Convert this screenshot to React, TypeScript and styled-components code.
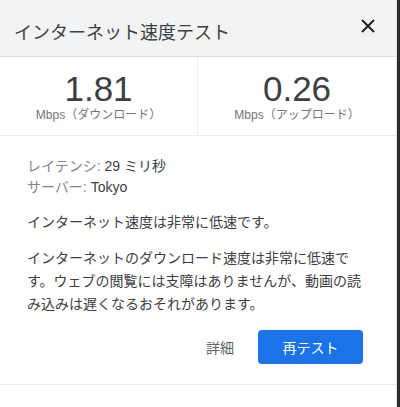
import React from 'react'
import styled, { createGlobalStyle } from 'styled-components'

const GlobalStyle = createGlobalStyle`
  html, body {
    margin: 0;
    padding: 0;
    background: #2b2b2b;
  }
  body {
    font-family: "Liberation Sans", "Noto Sans CJK JP", sans-serif;
  }
`

const Panel = styled.div`
  width: 396px;
  min-height: 407px;
  background: #fff;
  border-right: 1px solid #e3e3e3;
  color: #3c4043;
`

const Header = styled.div`
  height: 56px;
  display: flex;
  align-items: center;
  justify-content: space-between;
  padding: 0 16px 0 14px;
  background: #f1f3f4;
  border-bottom: 1px solid #dadce0;
`

const Title = styled.h1`
  margin: 0;
  font-size: 18px;
  font-weight: 400;
  color: #3c4043;
  padding-top: 6px;
`

const CloseButton = styled.button`
  width: 24px;
  height: 24px;
  display: flex;
  align-items: center;
  justify-content: center;
  border: 0;
  padding: 0;
  background: transparent;
  color: #202124;
  margin-top: -4px;
`

const Stats = styled.div`
  display: grid;
  grid-template-columns: 1fr 1fr;
  border-bottom: 1px solid #ececec;
`

const Stat = styled.div<{ $divider?: boolean }>`
  height: 78px;
  display: flex;
  flex-direction: column;
  align-items: center;
  padding-top: 14px;
  box-sizing: border-box;
  border-right: ${({ $divider }) => ($divider ? '1px solid #f0f0f0' : 'none')};
`

const Value = styled.div`
  font-size: 35px;
  line-height: 36px;
  color: #3c4043;
`

const Unit = styled.div`
  font-size: 12px;
  line-height: 16px;
  color: #70757a;
`

const Body = styled.div`
  padding: 20px 27px 0 27px;
  border-bottom: 1px solid #ececec;
  height: 249px;
  box-sizing: border-box;
`

const Meta = styled.div`
  font-size: 14px;
  line-height: 21px;
  margin-bottom: 13px;
`

const MetaLabel = styled.span`
  color: #80868b;
`

const Text = styled.p`
  margin: 0 0 13px;
  font-size: 14px;
  line-height: 23px;
  color: #3c4043;
`

const Actions = styled.div`
  display: flex;
  justify-content: flex-end;
  align-items: center;
  gap: 24px;
  margin-top: 14px;
  padding-right: 6px;
`

const LinkButton = styled.button`
  border: 0;
  background: transparent;
  padding: 0;
  font: inherit;
  font-size: 14px;
  color: #5f6368;
`

const PrimaryButton = styled.button`
  width: 105px;
  height: 34px;
  border: 0;
  border-radius: 4px;
  background: #1a73e8;
  color: #fff;
  font: inherit;
  font-size: 14px;
`

export default function App() {
  return (
    <>
      <GlobalStyle />
      <Panel>
        <Header>
          <Title>インターネット速度テスト</Title>
          <CloseButton aria-label="閉じる">
            <svg width="14" height="14" viewBox="0 0 14 14">
              <path d="M1 1L13 13M13 1L1 13" stroke="currentColor" strokeWidth="2" />
            </svg>
          </CloseButton>
        </Header>
        <Stats>
          <Stat $divider>
            <Value>1.81</Value>
            <Unit>Mbps（ダウンロード）</Unit>
          </Stat>
          <Stat>
            <Value>0.26</Value>
            <Unit>Mbps（アップロード）</Unit>
          </Stat>
        </Stats>
        <Body>
          <Meta>
            <div>
              <MetaLabel>レイテンシ: </MetaLabel>29 ミリ秒
            </div>
            <div>
              <MetaLabel>サーバー: </MetaLabel>Tokyo
            </div>
          </Meta>
          <Text>インターネット速度は非常に低速です。</Text>
          <Text>
            インターネットのダウンロード速度は非常に低速です。ウェブの閲覧には支障はありませんが、動画の読み込みは遅くなるおそれがあります。
          </Text>
          <Actions>
            <LinkButton>詳細</LinkButton>
            <PrimaryButton>再テスト</PrimaryButton>
          </Actions>
        </Body>
      </Panel>
    </>
  )
}
